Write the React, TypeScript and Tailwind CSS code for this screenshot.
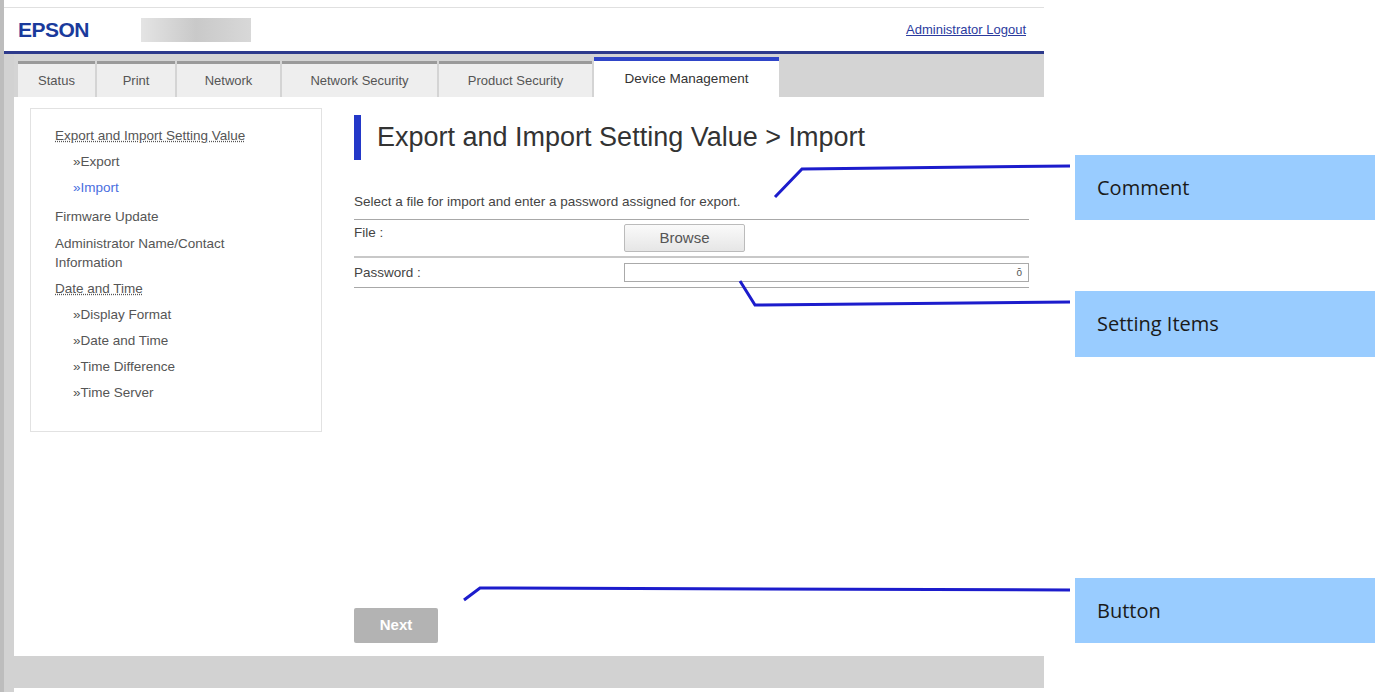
export default function App() {
  const tabs = [
    ["Status", "w-[77px]"],
    ["Print", "w-[78px]"],
    ["Network", "w-[103px]"],
    ["Network Security", "w-[155px]"],
    ["Product Security", "w-[153px]"],
  ];
  return (
    <div className="relative w-[1379px] h-[692px] bg-white overflow-hidden" style={{ fontFamily: '"Liberation Sans", Arial, sans-serif' }}>
      <div className="flex">
        <div className="w-[1044px] h-[692px] flex flex-col border-l-[4px] border-[#bdbdbd]">
          <div className="h-[8px] border-b border-[#e0e0e0]" />
          <div className="h-[46px] flex items-center px-[14px] border-b-[3px] border-[#2d3a8c]">
            <span className="text-[#1a3a9c] font-bold text-[21px] tracking-[-0.5px]">EPSON</span>
            <div className="ml-[52px] w-[110px] h-[24px] bg-gradient-to-r from-[#e4e4e4] via-[#c9c9c9] to-[#d8d8d8]" />
            <div className="flex-1" />
            <span className="text-[#2b3b9e] underline text-[13px] mr-[4px]">Administrator Logout</span>
          </div>
          <div className="flex-1 flex border-l-[10px] border-[#d2d2d2]">
            <div className="flex-1 flex flex-col">
              <div className="h-[43px] bg-[#d4d4d4] flex items-end pl-[4px] gap-[2px]">
                {tabs.map(([t, w]) => (
                  <div key={t} className={`${w} h-[36px] bg-[#eeeeee] border-t-[3px] border-[#9a9a9a] flex items-center justify-center text-[13px] text-[#555]`}>{t}</div>
                ))}
                <div className="w-[185px] h-[40px] bg-white border-t-[4px] border-[#2f45c8] flex items-center justify-center text-[13.5px] text-[#333]">Device Management</div>
              </div>
              <div className="flex-1 flex pt-[11px] pl-[16px]">
                <div className="w-[292px] h-[324px] border border-[#e2e2e2] pt-[19px] px-[24px] text-[13.5px] leading-[16px] text-[#555] flex flex-col gap-[10px]">
                  <div className="underline decoration-dotted">Export and Import Setting Value</div>
                  <div className="pl-[18px]">»Export</div>
                  <div className="pl-[18px] text-[#4a6ee0]">»Import</div>
                  <div className="mt-[3px]">Firmware Update</div>
                  <div className="leading-[19px] -my-[1px]">Administrator Name/Contact<br />Information</div>
                  <div className="underline decoration-dotted">Date and Time</div>
                  <div className="pl-[18px]">»Display Format</div>
                  <div className="pl-[18px]">»Date and Time</div>
                  <div className="pl-[18px]">»Time Difference</div>
                  <div className="pl-[18px]">»Time Server</div>
                </div>
                <div className="flex-1 ml-[32px] mr-[15px] flex flex-col pt-[7px]">
                  <div className="flex items-center gap-[16px]">
                    <div className="w-[7px] h-[45px] bg-[#2338c8]" />
                    <span className="text-[27px] text-[#333]">Export and Import Setting Value &gt; Import</span>
                  </div>
                  <div className="mt-[32px] text-[13.5px] text-[#444] pb-[7px] border-b border-[#a8a8a8]">Select a file for import and enter a password assigned for export.</div>
                  <div className="h-[38px] flex items-center border-b-2 border-[#c8c8c8] text-[13.5px] text-[#444]">
                    <span className="w-[270px] self-start pt-[3px]">File :</span>
                    <div className="w-[121px] h-[28px] border border-[#bbb] rounded-[2px] bg-gradient-to-b from-[#fafafa] to-[#e6e6e6] flex items-center justify-center text-[15px] text-[#555]">Browse</div>
                  </div>
                  <div className="h-[30px] flex items-center border-b border-[#a8a8a8] text-[13.5px] text-[#444]">
                    <span className="w-[270px]">Password :</span>
                    <div className="flex-1 h-[19px] border border-[#aaa] flex items-center justify-end pr-[6px] text-[10px] text-[#555]">ō</div>
                  </div>
                  <div className="flex-1" />
                  <div className="w-[84px] h-[35px] bg-[#b3b3b3] rounded-[2px] flex items-center justify-center text-white font-bold text-[15px] mb-[13px]">Next</div>
                </div>
              </div>
              <div className="h-[32px] bg-[#d2d2d2] mb-[4px]" />
            </div>
          </div>
        </div>
        <div className="flex-1 relative">
          <div className="absolute left-[31px] top-[155px] w-[300px] h-[65px] bg-[#99ccff] flex items-center pl-[22px] text-[20px] text-[#1a1a1a]" style={{ fontFamily: '"Open Sans", sans-serif' }}>Comment</div>
          <div className="absolute left-[31px] top-[291px] w-[300px] h-[66px] bg-[#99ccff] flex items-center pl-[22px] text-[20px] text-[#1a1a1a]" style={{ fontFamily: '"Open Sans", sans-serif' }}>Setting Items</div>
          <div className="absolute left-[31px] top-[578px] w-[300px] h-[65px] bg-[#99ccff] flex items-center pl-[22px] text-[20px] text-[#1a1a1a]" style={{ fontFamily: '"Open Sans", sans-serif' }}>Button</div>
        </div>
      </div>
      <svg className="absolute inset-0 pointer-events-none" width="1379" height="692">
        <g stroke="#1c1ccc" strokeWidth="3" fill="none">
          <polyline points="1070,166 802,169 775,197" />
          <polyline points="1070,302 755,305 740,281" />
          <polyline points="1070,590 480,588 464,600" />
        </g>
      </svg>
    </div>
  );
}
